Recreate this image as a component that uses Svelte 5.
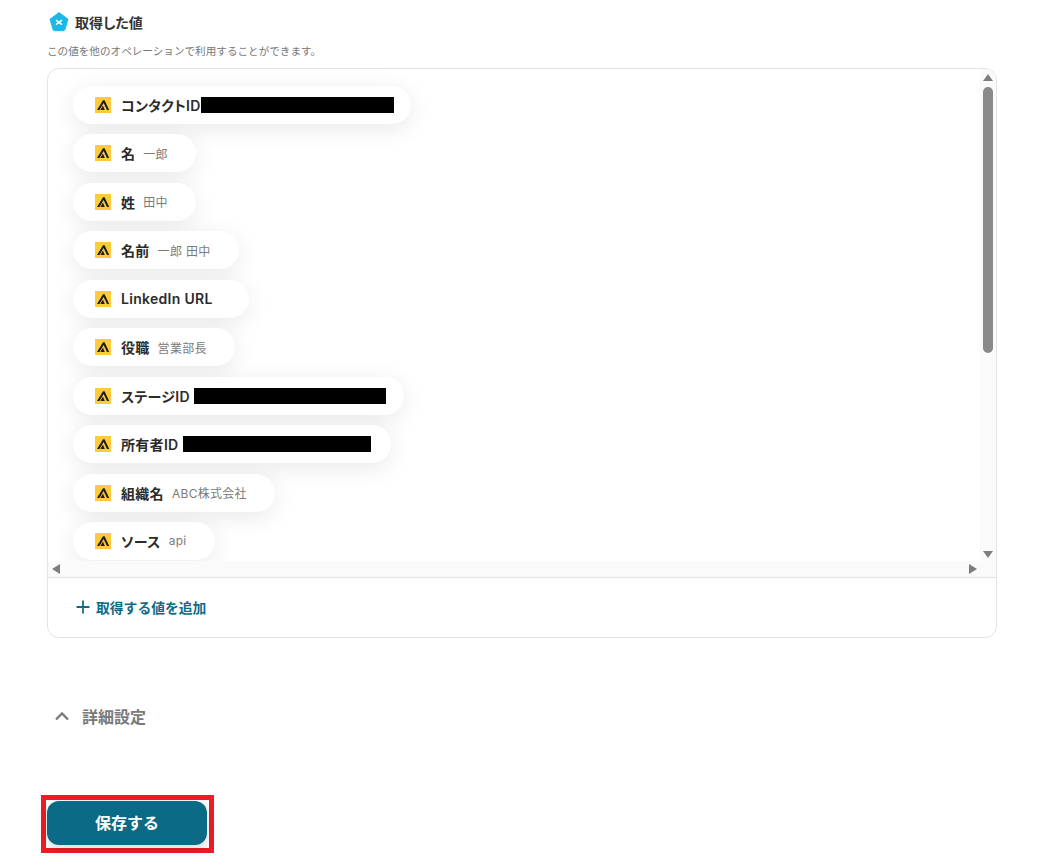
<script>
  const rows = [
    { label: "コンタクトID", redact: 193, gap: 0, end: 17 },
    { label: "名", value: "一郎" },
    { label: "姓", value: "田中" },
    { label: "名前", value: "一郎 田中" },
    { label: "LinkedIn URL", value: "" },
    { label: "役職", value: "営業部長" },
    { label: "ステージID", redact: 192, gap: 4, end: 18 },
    { label: "所有者ID", redact: 188, gap: 4, end: 20 },
    { label: "組織名", value: "ABC株式会社" },
    { label: "ソース", value: "api" },
  ];
</script>

<div class="page">
  <div class="title">
    <svg class="title-icon" width="20" height="20" viewBox="0 0 20 20">
      <path d="M10 .6 19 7.2 15.900 17.600a1.600 1.600 0 0 1-1.500 1.100H5.600a1.600 1.600 0 0 1-1.500-1.100L1 7.200Z" fill="#1ab8e8" stroke="#1ab8e8" stroke-linejoin="round" stroke-width="1"/>
      <path d="M7 8.200 13 12.600M13 8.200 7 12.600" stroke="#fff" stroke-width="1.600" fill="none"/>
    </svg>
    <span>取得した値</span>
  </div>
  <p class="hint">この値を他のオペレーションで利用することができます。</p>

  <div class="panel">
    <div class="scroll">
      <div class="scroll-main">
        <div class="list">
          {#each rows as row}
            <div class="chip" class:redacted={row.redact}>
              <svg class="logo" width="16" height="16" viewBox="0 0 16 16">
                <rect width="16" height="16" fill="#ffcb3d"/>
                <path d="M2 13 8 3.200H9.600L14.200 13H12L8.600 6 4.400 13Z" fill="#1d1d1b"/>
                <path d="M5.400 13 7.900 8.600 9.800 13Z" fill="#1d1d1b"/>
              </svg>
              <span class="label">{row.label}</span>
              {#if row.redact}
                <span class="black" style="width: {row.redact}px; margin-left: {row.gap}px; margin-right: {row.end}px"></span>
              {:else}
                <span class="value">{row.value}</span>
              {/if}
            </div>
          {/each}
        </div>
        <div class="vbar">
          <svg width="10" height="8" viewBox="0 0 10 8"><path d="M5 0 10 7H0Z" fill="#7d7d7d"/></svg>
          <div class="track"><div class="thumb"></div></div>
          <svg width="10" height="8" viewBox="0 0 10 8"><path d="M5 8 10 1H0Z" fill="#7d7d7d"/></svg>
        </div>
      </div>
      <div class="hbar">
        <svg width="8" height="10" viewBox="0 0 8 10"><path d="M0 5 8 0V10Z" fill="#7d7d7d"/></svg>
        <svg width="8" height="10" viewBox="0 0 8 10"><path d="M8 5 0 0V10Z" fill="#7d7d7d"/></svg>
      </div>
    </div>
    <div class="add">
      <svg width="14" height="14" viewBox="0 0 14 14"><path d="M7 .5V13.500M.5 7H13.500" stroke="#0e6b85" stroke-width="1.800" fill="none"/></svg>
      <span>取得する値を追加</span>
    </div>
  </div>

  <div class="details">
    <svg width="16" height="10" viewBox="0 0 16 10"><path d="M2 8.500 8 2.500 14 8.500" stroke="#7a7a7a" stroke-width="2.400" fill="none"/></svg>
    <span>詳細設定</span>
  </div>

  <div class="save-mark">
    <button class="save">保存する</button>
  </div>
</div>

<style>
  :global(body) {
    background: #fff;
    overflow: hidden;
  }

  .page {
    height: 859px;
    padding: 11px 57px 0 47px;
    box-sizing: border-box;
    font-family: Inter, "Noto Sans CJK JP", sans-serif;
    color: #2b2b2b;
  }

  .title {
    display: flex;
    align-items: center;
    gap: 6px;
    margin-left: 2px;
    height: 22px;
    font-size: 14px;
    font-weight: 600;
    font-feature-settings: "palt";
    color: #333;
  }

  .title-icon {
    flex-shrink: 0;
  }

  .hint {
    margin: 10px 0 0;
    height: 18px;
    line-height: 18px;
    font-size: 10.600px;
    color: #777;
  }

  .panel {
    margin-top: 7px;
    height: 570px;
    box-sizing: border-box;
    border: 1px solid #e3e3e3;
    border-radius: 12px;
    overflow: hidden;
  }

  .scroll {
    height: 508px;
    display: flex;
    flex-direction: column;
    border-bottom: 1px solid #e3e3e3;
  }

  .scroll-main {
    flex: 1;
    min-height: 0;
    display: flex;
  }

  .list {
    flex: 1;
    min-width: 0;
    overflow: hidden;
    padding: 17px 0 0 25px;
    display: flex;
    flex-direction: column;
    align-items: flex-start;
    gap: 10.450px;
  }

  .chip {
    flex-shrink: 0;
    display: flex;
    align-items: center;
    height: 38px;
    padding: 0 28px 0 22px;
    background: #fff;
    border-radius: 19px;
    box-shadow: 0 5px 24px rgba(0, 0, 0, 0.09);
  }

  .chip.redacted {
    padding-right: 0;
  }

  .logo {
    flex-shrink: 0;
    margin-right: 10px;
  }

  .label {
    font-size: 14px;
    font-weight: 600;
    font-feature-settings: "palt";
    letter-spacing: 0.3px;
    white-space: nowrap;
    color: #2b2b2b;
  }

  .value {
    margin-left: 8px;
    font-size: 12px;
    letter-spacing: 0.3px;
    white-space: nowrap;
    color: #7b7b7b;
  }

  .black {
    flex-shrink: 0;
    height: 16px;
    background: #000;
  }

  .vbar {
    flex-shrink: 0;
    width: 16px;
    box-sizing: border-box;
    padding: 5px 3px 3px;
    display: flex;
    flex-direction: column;
    align-items: center;
    background: #fafafa;
  }

  .track {
    flex: 1;
    width: 100%;
    padding-top: 5px;
  }

  .thumb {
    height: 266px;
    background: #8a8a8a;
    border-radius: 5px;
  }

  .hbar {
    flex-shrink: 0;
    height: 16px;
    display: flex;
    align-items: center;
    justify-content: space-between;
    padding: 0 19px 0 4px;
    background: #fafafa;
  }

  .add {
    display: flex;
    align-items: center;
    gap: 6px;
    height: 60px;
    box-sizing: border-box;
    padding: 0 0 2px 28px;
    font-size: 13.800px;
    font-weight: 600;
    color: #0e6b85;
  }

  .details {
    display: flex;
    align-items: center;
    gap: 12px;
    margin: 66px 0 0 7px;
    height: 24px;
    font-size: 16px;
    font-weight: 600;
    color: #7a7a7a;
  }

  .save-mark {
    display: inline-flex;
    margin: 67px 0 0 -6px;
    padding: 1px 2px 3px 1px;
    border: 5px solid #ee1c25;
  }

  .save {
    width: 160px;
    height: 44px;
    padding: 0 0 2px;
    border: none;
    border-radius: 12px;
    background: #0b6a85;
    color: #fff;
    font-family: inherit;
    font-size: 16px;
    font-weight: 700;
    box-shadow: 0 4px 12px rgba(0, 0, 0, 0.15);
  }
</style>
